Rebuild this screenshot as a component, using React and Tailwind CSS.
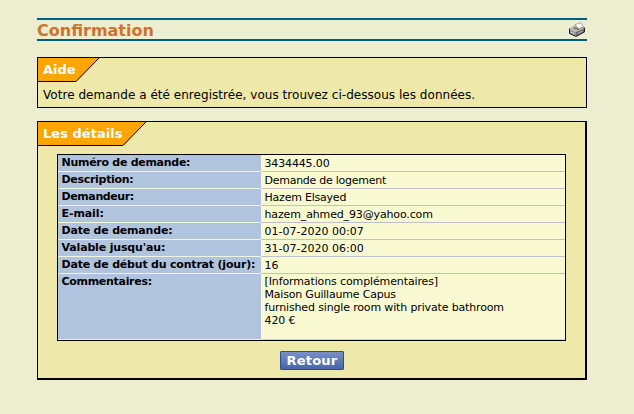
const rows = [
  { label: "Numéro de demande:", value: "3434445.00", ls: "tracking-[-0.28px]", vs: "tracking-[-0.15px]" },
  { label: "Description:", value: "Demande de logement", ls: "tracking-[-0.3px]", vs: "tracking-[-0.26px]" },
  { label: "Demandeur:", value: "Hazem Elsayed", ls: "tracking-[-0.4px]", vs: "tracking-[-0.22px]" },
  { label: "E-mail:", value: "hazem_ahmed_93@yahoo.com", ls: "tracking-[-0.1px]", vs: "tracking-[-0.14px]" },
  { label: "Date de demande:", value: "01-07-2020 00:07", ls: "tracking-[-0.2px]", vs: "tracking-normal" },
  { label: "Valable jusqu'au:", value: "31-07-2020 06:00", ls: "tracking-[-0.16px]", vs: "tracking-normal" },
  { label: "Date de début du contrat (jour):", value: "16", ls: "tracking-[-0.2px]", vs: "tracking-normal" },
];

const comments = [
  { text: "[Informations complémentaires]", s: "tracking-[-0.12px]" },
  { text: "Maison Guillaume Capus", s: "tracking-[-0.2px]" },
  { text: "furnished single room with private bathroom", s: "tracking-[-0.15px]" },
  { text: "420 €", s: "tracking-[-0.1px]" },
];

function Printer() {
  return (
    <svg width="16" height="16" viewBox="0 0 16 16" className="block">
      <path d="M0.5 6.5 L7 3 L15 5 L15.5 10 L7 14.5 L0.5 11.5 Z" fill="#8f8b8c" />
      <path d="M1 6.5 L6.5 3.5 L14 6 L7 9.5 Z" fill="#b5afae" />
      <path d="M6 2.5 L12 0.8 L14.5 5 L9.5 6.5 Z" fill="#fff" stroke="#77736e" strokeWidth=".6" />
      <path d="M1 7 L7 9.5 V14 L1 11.5 Z" fill="#98939a" />
      <path d="M7 9.5 L15 6 V10 L7 14 Z" fill="#6f6a6c" />
      <path d="M0.5 6.5 V11.5 L7 14.5 L15.5 10 V5.5" fill="none" stroke="#292325" />
      <path d="M1 6.9 L7 9.6 L14.5 6.2" fill="none" stroke="#f3f0ee" strokeWidth=".6" />
      <path d="M2 10 L5 11.5" stroke="#d4d0ce" />
      <path d="M9 11.5 L13.5 9" stroke="#bfb9b6" />
      <path d="M5 5.8 L10 7.6" stroke="#5d585a" />
    </svg>
  );
}

function Tab({ width, children, className }) {
  return (
    <div className="relative h-6 w-fit">
      <svg width={width} height="24" className="absolute left-0 top-0">
        <path d={`M0 0 H${width} L${width - 23} 24 H0 Z`} fill="#ffa500" />
        <path d={`M0 23.5 H${width - 23} L${width} 0`} fill="none" stroke="#000" />
      </svg>
      <div className={`relative pl-[5px] text-[13px] font-bold leading-6 text-white whitespace-nowrap ${className}`}>{children}</div>
    </div>
  );
}

export default function App() {
  return (
    <div className="h-[414px] w-[634px] overflow-hidden bg-[#ededd0] pl-[37px] pt-[18px] font-['DejaVu_Sans',Verdana,sans-serif] text-black">
      <div className="flex h-[23px] w-[550px] items-start justify-between border-y-2 border-[#006080]">
        <h1 className="pt-px text-[16px] font-bold leading-[19px] tracking-normal text-[#cf722b]">Confirmation</h1>
        <div className="pr-[2px] pt-[2px]">
          <Printer />
        </div>
      </div>
      <section className="mt-4 h-[51px] w-[550px] border border-black bg-[#eee8aa]">
        <Tab width={61} className="tracking-normal">Aide</Tab>
        <p className="pl-[5px] pt-[4px] text-[12px] leading-[18px] tracking-[0.035px] whitespace-nowrap">
          Votre demande a été enregistrée, vous trouvez ci-dessous les données.
        </p>
      </section>
      <section className="mt-[13px] h-[259px] w-[550px] border-b-2 border-l border-r-2 border-t border-black bg-[#eee8aa]">
        <Tab width={108} className="tracking-[0.04px]">Les détails</Tab>
        <div className="ml-[19px] mt-2 h-[187px] w-[509px] border border-black text-[11px]">
          {rows.map((r) => (
            <div key={r.label} className="flex h-[17px]">
              <div className={`w-[203px] border-b border-[#f1f4df] bg-[#b0c4de] pl-[3.5px] font-bold leading-[16px] whitespace-nowrap ${r.ls}`}>{r.label}</div>
              <div className={`flex-1 border-b border-[#b9c3c8] bg-[#fafad2] pl-[3.5px] leading-[17px] whitespace-nowrap ${r.vs}`}>{r.value}</div>
            </div>
          ))}
          <div className="flex h-[66px]">
            <div className="w-[203px] border-b border-[#f1f4df] bg-[#b0c4de] pl-[3.5px] font-bold leading-[16px] tracking-[-0.3px]">Commentaires:</div>
            <div className="flex-1 border-b border-[#c8d0d8] bg-[#fafad2] pl-[3.5px] pt-px">
              {comments.map((c) => (
                <div key={c.text} className={`h-[13px] leading-[13px] whitespace-nowrap ${c.s}`}>{c.text}</div>
              ))}
            </div>
          </div>
        </div>
        <button className="ml-[242px] mt-[10px] block h-[19px] w-16 rounded-[1px] border border-[#304b91] bg-linear-to-b from-[#7890c4] to-[#4866a8] text-center text-[13px] font-bold leading-[17px] tracking-[0.2px] text-white">
          Retour
        </button>
      </section>
    </div>
  );
}
